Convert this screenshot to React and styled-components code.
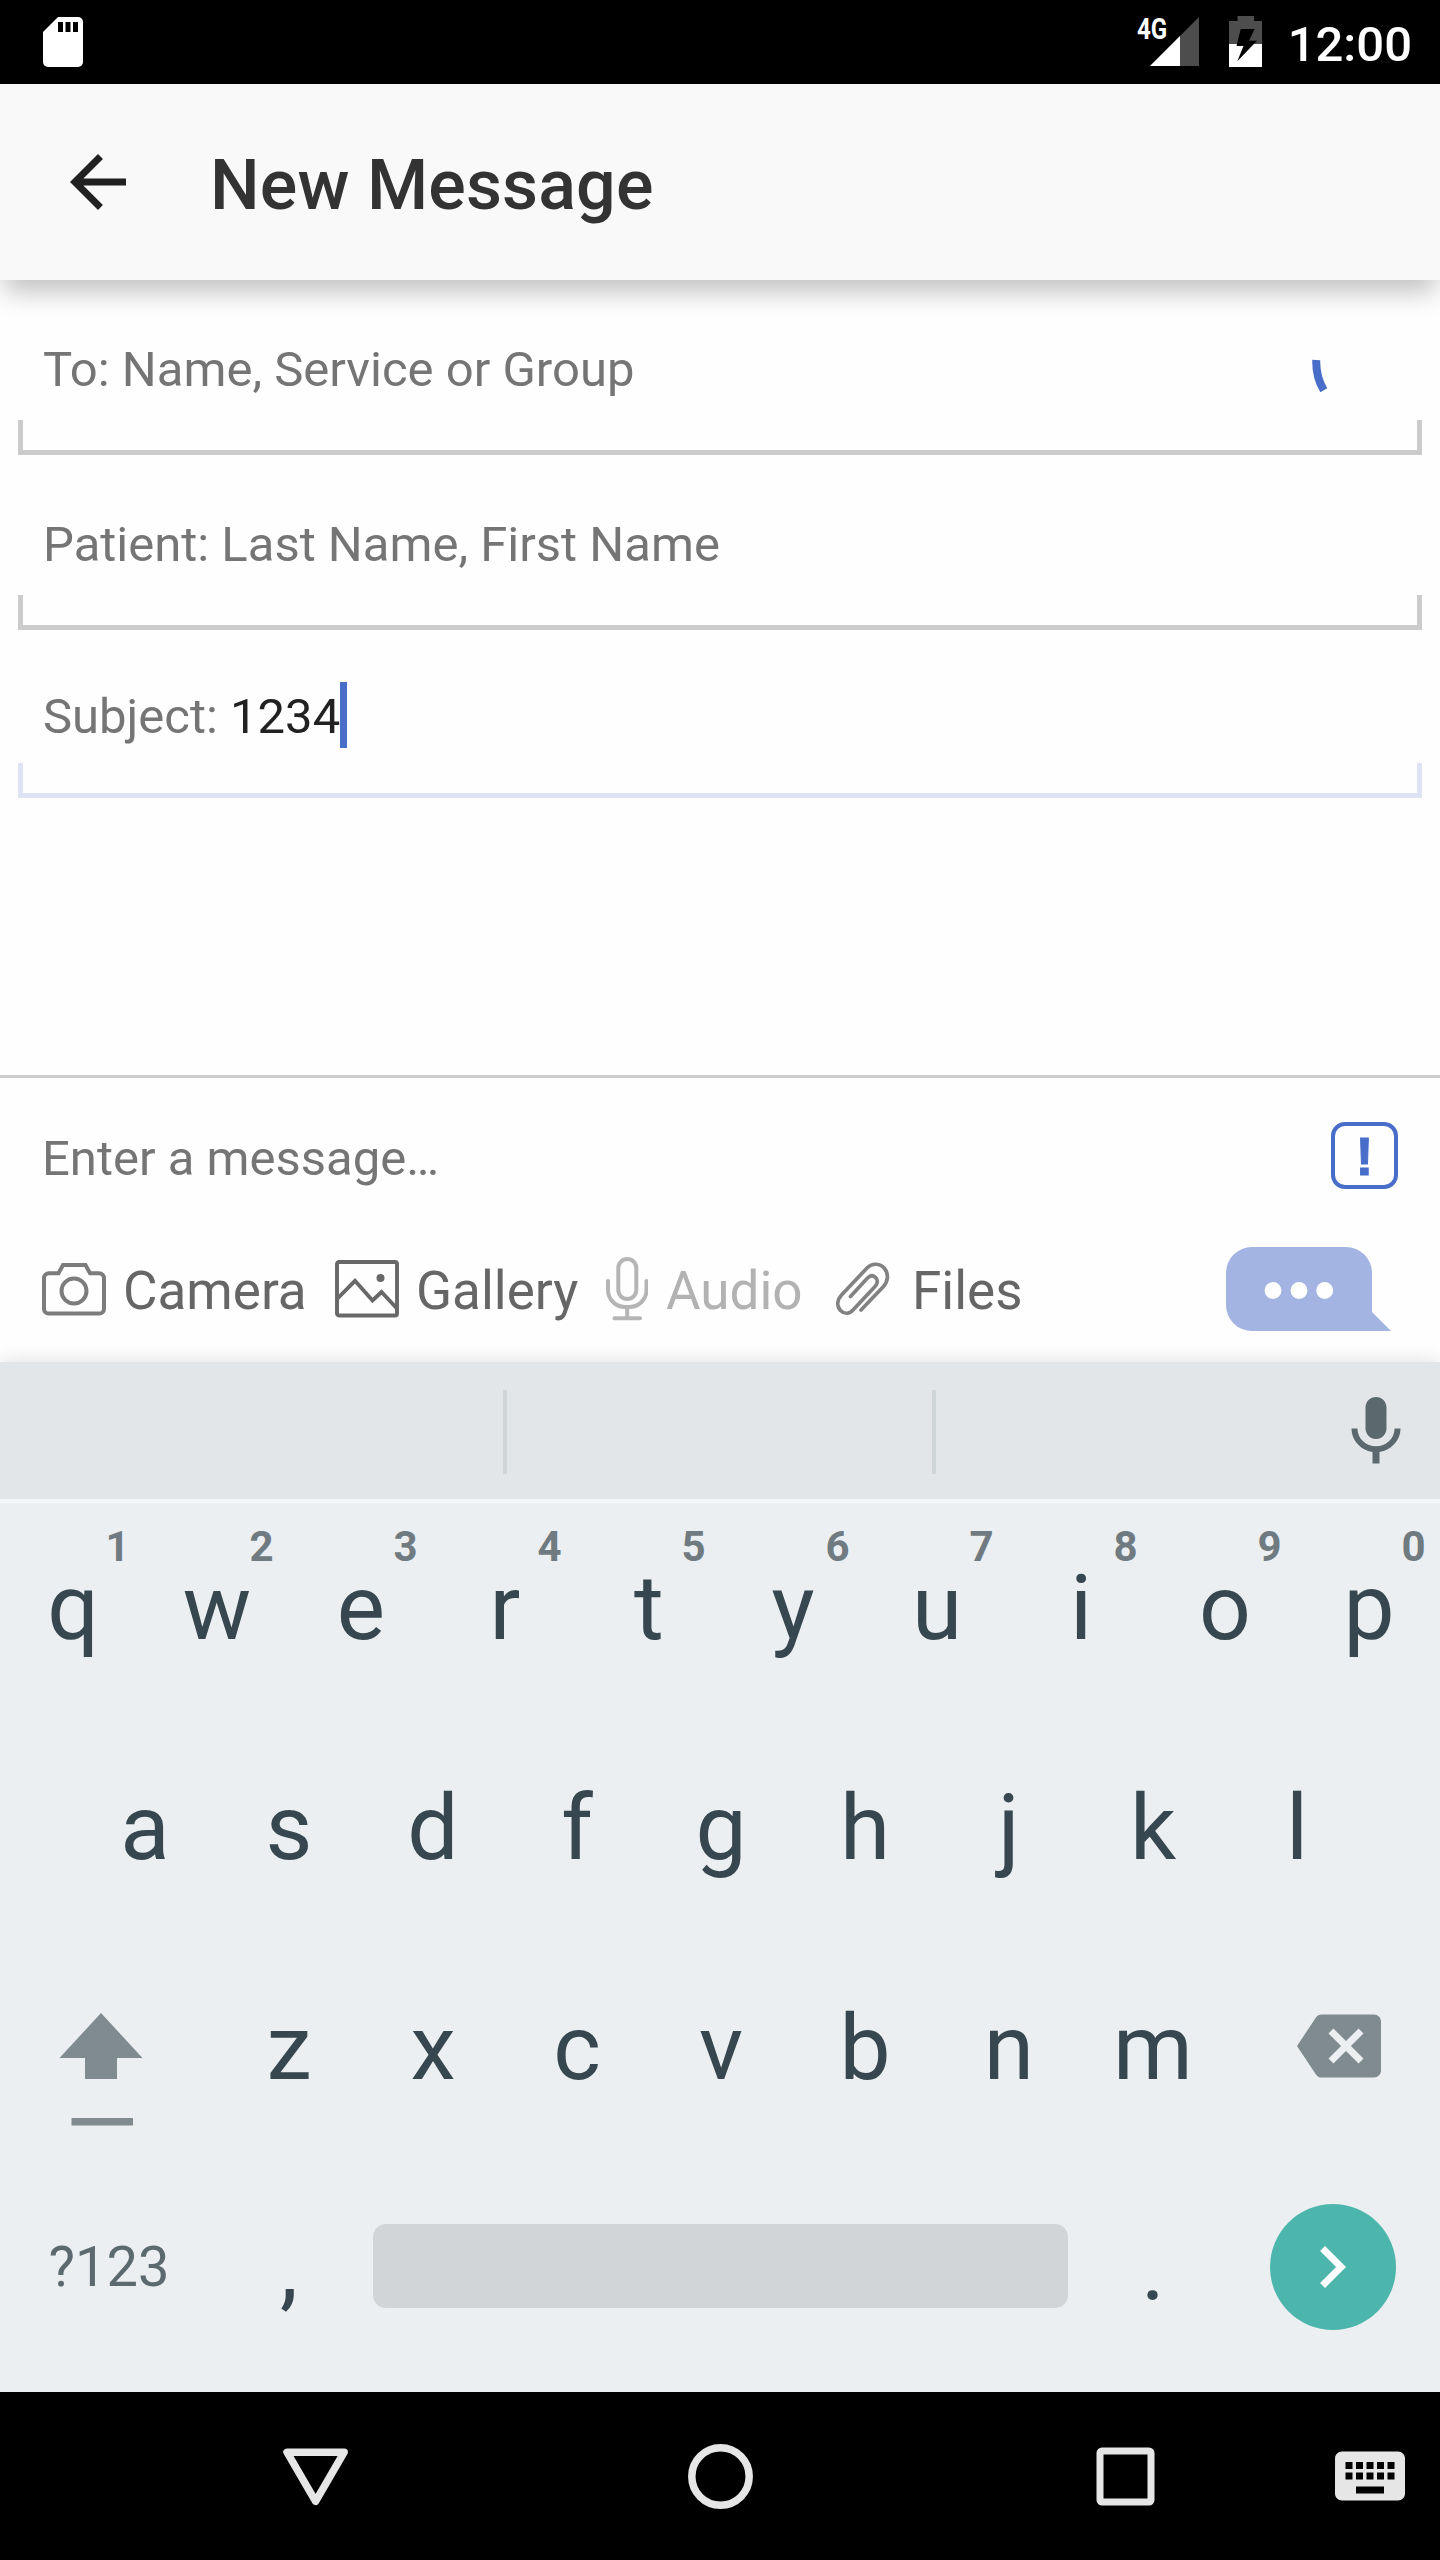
import React from "react";
import styled, { createGlobalStyle } from "styled-components";

const GlobalStyle = createGlobalStyle`
  * { box-sizing: border-box; }
  body { margin: 0; background: #fefefe; }
  svg { display: block; flex: none; }
`;

const Screen = styled.div`
  width: 1440px;
  height: 2560px;
  display: flex;
  flex-direction: column;
  background: #fefefe;
  color: #212121;
  font-family: Roboto, "Noto Sans", sans-serif;
  overflow: hidden;
`;

const StatusBar = styled.header`
  flex: none;
  height: 84px;
  padding: 0 28px 0 43px;
  display: flex;
  align-items: center;
  justify-content: space-between;
  background: #000;
`;

const StatusIcons = styled.div`
  display: flex;
  align-items: center;
`;

const Network = styled.div`
  position: relative;
  display: flex;
  width: 66px;
  height: 52px;
  padding-left: 16px;
`;

const NetworkType = styled.span`
  position: absolute;
  left: 3px;
  top: -5px;
  color: #fff;
  font-size: 29px;
  font-weight: 700;
  line-height: 36px;
  transform: scaleX(0.83);
  transform-origin: left center;
`;

const Clock = styled.span`
  margin-left: 25px;
  padding-top: 5px;
  color: #fff;
  font-size: 49px;
  font-weight: 500;
  line-height: 60px;
`;

const AppBar = styled.div`
  flex: none;
  position: relative;
  z-index: 1;
  height: 196px;
  padding-left: 56px;
  display: flex;
  align-items: center;
  gap: 70px;
  background: #f9f9f9;
  box-shadow: 0 16px 24px -4px rgba(0, 0, 0, 0.24);
`;

const Title = styled.h1`
  margin: 0;
  padding-top: 6px;
  color: #333;
  font-size: 70px;
  font-weight: 500;
  letter-spacing: 0.12px;
  line-height: 84px;
`;

const Field = styled.div`
  flex: none;
  height: ${(p) => p.$height}px;
  padding: 0 18px;
  display: flex;
  flex-direction: column;
  justify-content: flex-end;
  gap: ${(p) => p.$gap}px;
`;

const FieldRow = styled.div`
  height: 60px;
  padding: 0 90px 0 25px;
  display: flex;
  align-items: center;
  justify-content: space-between;
`;

const FieldText = styled.div`
  display: flex;
  align-items: center;
  padding-top: 2px;
  white-space: pre;
  color: #757575;
  font-size: 49px;
  line-height: 60px;
`;

const Value = styled.span`
  color: #212121;
`;

const Caret = styled.span`
  width: 7px;
  height: 66px;
  margin: -8px 0 -3px;
  background: #486ec9;
`;

const Bracket = styled.div`
  height: 35px;
  border: 5px solid ${(p) => (p.$active ? "#dfe4f4" : "#cbcbcb")};
  border-top: 0;
`;

const Body = styled.div`
  flex: 1;
`;

const Composer = styled.section`
  flex: none;
  height: 287px;
  padding: 0 42px;
  border-top: 3px solid #cbcccb;
`;

const MessageRow = styled.div`
  height: 155px;
  display: flex;
  align-items: center;
  justify-content: space-between;
`;

const Placeholder = styled.span`
  padding-top: 6px;
  color: #757575;
  font-size: 49px;
  line-height: 60px;
`;

const Priority = styled.span`
  width: 67px;
  height: 67px;
  border: 4px solid #486ec9;
  border-radius: 14px;
  color: #486ec9;
  font: bold 54px/61px "Liberation Sans", sans-serif;
  -webkit-text-stroke: 1px #486ec9;
  text-align: center;
`;

const ToolRow = styled.div`
  height: 112px;
  display: flex;
  align-items: center;
`;

const Tool = styled.div`
  flex: none;
  width: ${(p) => p.$width}px;
  display: flex;
  align-items: center;
  gap: ${(p) => p.$gap}px;
  color: ${(p) => (p.$disabled ? "#b2b2b2" : "#666")};
`;

const ToolLabel = styled.span`
  padding-top: 3px;
  font-size: 53px;
  line-height: 64px;
`;

const SendBubble = styled.svg`
  margin-left: auto;
  margin-right: 7px;
`;

const Keyboard = styled.section`
  flex: none;
  position: relative;
  height: 1030px;
  background: #ebeff2;
  box-shadow: 0 -2px 18px rgba(0, 0, 0, 0.11);
`;

const Suggestions = styled.div`
  height: 141px;
  padding-right: 22px;
  display: flex;
  align-items: center;
  justify-content: space-between;
  background: #e2e6e9;
  border-bottom: 4px solid #f4f6f8;
`;

const SuggestionSlots = styled.div`
  padding-left: 78px;
  display: flex;
`;

const Slot = styled.div`
  width: 429px;
  height: 84px;
  margin-bottom: -3px;
  border-right: 4px solid #d0d5d8;
`;

const KeyRow = styled.div`
  height: 220px;
  padding: 0 ${(p) => p.$inset || 0}px 10px;
  display: flex;
  align-items: center;
`;

const Key = styled.div`
  position: relative;
  flex: none;
  width: ${(p) => p.$width || 144}px;
  height: 210px;
  padding-left: 2px;
  display: flex;
  align-items: center;
  justify-content: center;
  color: #37474f;
  font-size: 91px;
  line-height: 108px;
`;

const Hint = styled.span`
  position: absolute;
  left: 105px;
  top: 19px;
  width: 25px;
  text-align: center;
  color: #6f7b80;
  font-size: 42px;
  font-weight: 700;
  line-height: 50px;
`;

const ShiftKey = styled(Key)`
  padding: 0;
`;

const SymbolsKey = styled(Key)`
  padding: 0 0 2px 2px;
  color: #5c6a70;
  font-size: 56px;
`;

const SpaceKey = styled.div`
  flex: none;
  width: 695px;
  height: 84px;
  margin: 0 12px 4px 13px;
  border-radius: 13px;
  background: #d1d5d8;
`;

const EnterKey = styled.div`
  width: 126px;
  height: 126px;
  margin: 0 0 3px 46px;
  padding-right: 3px;
  display: flex;
  align-items: center;
  justify-content: center;
  border-radius: 50%;
  background: #4db6ac;
`;

const NavBar = styled.nav`
  flex: none;
  height: 168px;
  padding: 0 28px 0 279px;
  display: flex;
  align-items: center;
  background: #000;
`;

const NavItem = styled.div`
  width: ${(p) => p.$width}px;
  display: flex;
`;

const SdCard = () => (
  <svg width="40" height="50" viewBox="0 0 40 50">
    <path fill="#fff" d="M15 0h20a5 5 0 0 1 5 5v40a5 5 0 0 1-5 5H5a5 5 0 0 1-5-5V15z" />
    <path d="M15 5h5v10h-5zM22.5 5h5v10h-5zM30 5h5v10h-5z" />
  </svg>
);

const Signal = () => (
  <Network>
    <NetworkType>4G</NetworkType>
    <svg width="50" height="52" viewBox="0 0 50 52">
      <path fill="#4d4d4d" d="M49 1v49H0z" />
      <path fill="#fff" d="M30 20v30H0z" />
    </svg>
  </Network>
);

const Battery = styled.svg`
  margin-left: 29px;
`;

const ArrowBack = () => (
  <svg width="84" height="84" viewBox="0 0 24 24" fill="#212121">
    <path d="M20 11H7.83l5.59-5.59L12 4l-8 8 8 8 1.41-1.41L7.83 13H20v-2z" />
  </svg>
);

const SpinnerArc = styled.svg`
  margin-top: 16px;
`;

const Spinner = () => (
  <SpinnerArc width="20" height="36" viewBox="0 0 20 36" fill="none" stroke="#486ec9" strokeWidth="8">
    <path d="M4.300 1A56 56 0 0 0 11.800 31.300" />
  </SpinnerArc>
);

const CameraIcon = () => (
  <svg width="64" height="54" viewBox="0 0 64 54" fill="none" stroke="#7c7c7c" strokeWidth="4">
    <path d="M7 11.2H16.5L21 3H43.5L48 11.2H57a5 5 0 0 1 5 5V47a4.500 4.500 0 0 1-5 4.500H7A4.500 4.500 0 0 1 2 47V16.200A5 5 0 0 1 7 11.200Z" />
    <circle cx="32" cy="29" r="12.500" />
  </svg>
);

const GalleryIcon = () => (
  <svg width="64" height="58" viewBox="0 0 64 58" fill="none" stroke="#686868" strokeWidth="3.900">
    <rect x="2" y="2" width="60" height="53.500" rx="2" />
    <path d="M2.500 38.500L20 20.800L37.500 40.500L46.500 32L61.500 48" />
    <circle cx="45.500" cy="18" r="4" fill="#686868" stroke="none" />
  </svg>
);

const AudioIcon = () => (
  <svg width="42" height="64" viewBox="0 0 42 64" fill="none" stroke="#b5b5b5" strokeWidth="4" strokeLinecap="round">
    <rect x="12.300" y="2" width="18" height="40" rx="9" />
    <path d="M2 24V33a17 17 0 0 0 17 17h4.500a17 17 0 0 0 17-17V24M21.200 50V60M8.500 61.200H34" />
  </svg>
);

const ClipIcon = () => (
  <svg width="54" height="54" viewBox="0 0 54 54" fill="none" stroke="#828282" strokeWidth="3.700" strokeLinecap="round">
    <path d="M25 48L47.500 24.500C52 19.500 53 12 48.500 6.500C44 1 36 1 31.500 5.500L5.500 33C1 38 .5 44 4.500 48.500C8.500 52.500 13.500 52 17 48L39 24.500C42 21 42 17.500 39.500 15.500C37 13 34 13.500 31.500 16L14.500 34.500" />
  </svg>
);

const Chat = () => (
  <SendBubble width="165" height="84" viewBox="0 0 165 84">
    <path fill="#a3b4e3" d="M26 0H120A26 26 0 0 1 146 26V65L165 84H26A26 26 0 0 1 0 58V26A26 26 0 0 1 26 0Z" />
    <g fill="#fff">
      <circle cx="47" cy="43.500" r="8.400" />
      <circle cx="73" cy="43.500" r="8.400" />
      <circle cx="98.700" cy="43.500" r="8.400" />
    </g>
  </SendBubble>
);

const VoiceGlyph = styled.svg`
  margin-top: 3px;
`;

const VoiceIcon = () => (
  <VoiceGlyph width="84" height="84" viewBox="0 0 24 24" fill="#5b686e">
    <path d="M12 14c1.66 0 2.990-1.340 2.990-3L15 5c0-1.660-1.340-3-3-3S9 3.340 9 5v6c0 1.660 1.340 3 3 3zm5.300-3c0 3-2.540 5.100-5.300 5.100S6.700 14 6.700 11H5c0 3.410 2.720 6.230 6 6.720V21h2v-3.280c3.280-.48 6-3.300 6-6.720h-1.700z" />
  </VoiceGlyph>
);

const ShiftIcon = () => (
  <svg width="216" height="210" viewBox="0 1943 216 210" fill="#808b90">
    <path d="M101 2013L142.500 2058H117V2079H85V2058H59.500Z" />
    <rect x="71.500" y="2118" width="61.500" height="7.500" />
  </svg>
);

const BackspaceIcon = styled.svg`
  margin: 0 0 4px 73px;
`;

const LETTERS_TOP = "qwertyuiop".split("");
const LETTERS_HOME = "asdfghjkl".split("");
const LETTERS_BOTTOM = "zxcvbnm".split("");

export default function App() {
  return (
    <Screen>
      <GlobalStyle />
      <StatusBar>
        <SdCard />
        <StatusIcons>
          <Signal />
          <Battery width="34" height="52" viewBox="0 0 34 52">
            <path fill="#4d4d4d" d="M8.500 0h16.500v5H33v23H0V5h8.500z" />
            <path fill="#fff" d="M0 28h33v23H0z" />
            <path d="M11.700 13h14L20 24.700h8L8.300 45.300L14.500 30H7.500z" />
          </Battery>
          <Clock>12:00</Clock>
        </StatusIcons>
      </StatusBar>

      <AppBar>
        <ArrowBack />
        <Title>New Message</Title>
      </AppBar>

      <Field $height={175} $gap={21}>
        <FieldRow>
          <FieldText>To: Name, Service or Group</FieldText>
          <Spinner />
        </FieldRow>
        <Bracket />
      </Field>
      <Field $height={175} $gap={21}>
        <FieldRow>
          <FieldText>Patient: Last Name, First Name</FieldText>
        </FieldRow>
        <Bracket />
      </Field>
      <Field $height={168} $gap={17}>
        <FieldRow>
          <FieldText>
            <span>{"Subject: "}</span>
            <Value>1234</Value>
            <Caret />
          </FieldText>
        </FieldRow>
        <Bracket $active />
      </Field>

      <Body />

      <Composer>
        <MessageRow>
          <Placeholder>Enter a message…</Placeholder>
          <Priority>!</Priority>
        </MessageRow>
        <ToolRow>
          <Tool $width={293} $gap={17}>
            <CameraIcon />
            <ToolLabel>Camera</ToolLabel>
          </Tool>
          <Tool $width={271} $gap={17}>
            <GalleryIcon />
            <ToolLabel>Gallery</ToolLabel>
          </Tool>
          <Tool $width={230} $gap={18} $disabled>
            <AudioIcon />
            <ToolLabel>Audio</ToolLabel>
          </Tool>
          <Tool $width={200} $gap={22}>
            <ClipIcon />
            <ToolLabel>Files</ToolLabel>
          </Tool>
          <Chat />
        </ToolRow>
      </Composer>

      <Keyboard>
        <Suggestions>
          <SuggestionSlots>
            <Slot />
            <Slot />
          </SuggestionSlots>
          <VoiceIcon />
        </Suggestions>
        <KeyRow>
          {LETTERS_TOP.map((letter, i) => (
            <Key key={letter}>
              {letter}
              <Hint>{(i + 1) % 10}</Hint>
            </Key>
          ))}
        </KeyRow>
        <KeyRow $inset={72}>
          {LETTERS_HOME.map((letter) => (
            <Key key={letter}>{letter}</Key>
          ))}
        </KeyRow>
        <KeyRow>
          <ShiftKey $width={216}>
            <ShiftIcon />
          </ShiftKey>
          {LETTERS_BOTTOM.map((letter) => (
            <Key key={letter}>{letter}</Key>
          ))}
          <BackspaceIcon width="84" height="84" viewBox="0 0 24 24" fill="#808b90">
            <path d="M22 3H7c-.69 0-1.230.35-1.590.88L0 12l5.410 8.110c.36.53.9.89 1.590.89h15c1.100 0 2-.9 2-2V5c0-1.100-.9-2-2-2zm-3 12.590L17.590 17 14 13.410 10.410 17 9 15.590 12.590 12 9 8.410 10.410 7 14 10.590 17.590 7 19 8.410 15.410 12 19 15.590z" />
          </BackspaceIcon>
        </KeyRow>
        <KeyRow>
          <SymbolsKey $width={216}>?123</SymbolsKey>
          <Key>,</Key>
          <SpaceKey />
          <Key>.</Key>
          <EnterKey>
            <svg width="84" height="84" viewBox="0 0 24 24" fill="#fff">
              <path d="M8.590 16.590L13.170 12 8.590 7.410 10 6l6 6-6 6z" />
            </svg>
          </EnterKey>
        </KeyRow>
      </Keyboard>

      <NavBar>
        <NavItem $width={405}>
          <svg width="72" height="72" viewBox="0 0 72 72" fill="none" stroke="#e6e6e6" strokeWidth="7.500" strokeLinejoin="round">
            <path d="M8 12.200H65.200L36.600 61.300Z" />
          </svg>
        </NavItem>
        <NavItem $width={405}>
          <svg width="72" height="72" viewBox="0 0 72 72" fill="none" stroke="#e6e6e6" strokeWidth="7.500">
            <circle cx="36.500" cy="36.500" r="28.700" />
          </svg>
        </NavItem>
        <NavItem $width={239}>
          <svg width="72" height="72" viewBox="0 0 72 72" fill="none" stroke="#e6e6e6" strokeWidth="7">
            <rect x="11" y="11" width="51" height="51" rx="2" />
          </svg>
        </NavItem>
        <svg width="84" height="84" viewBox="0 0 24 24" fill="#e6e6e6">
          <path d="M20 5H4c-1.100 0-1.990.9-1.990 2L2 17c0 1.100.9 2 2 2h16c1.100 0 2-.9 2-2V7c0-1.100-.9-2-2-2zm-9 3h2v2h-2V8zm0 3h2v2h-2v-2zM8 8h2v2H8V8zm0 3h2v2H8v-2zm-1 2H5v-2h2v2zm0-3H5V8h2v2zm9 7H8v-2h8v2zm0-4h-2v-2h2v2zm0-3h-2V8h2v2zm3 3h-2v-2h2v2zm0-3h-2V8h2v2z" />
        </svg>
      </NavBar>
    </Screen>
  );
}
